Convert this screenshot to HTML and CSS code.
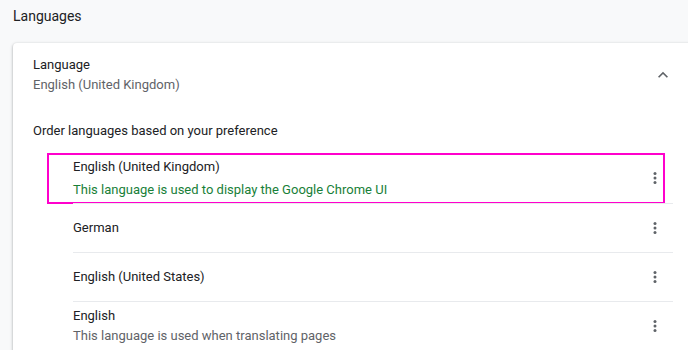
FILE: index.html
```html
<!DOCTYPE html>
<html lang="en">
<head>
<meta charset="utf-8">
<title>Languages</title>
<link rel="stylesheet" href="styles.css">
</head>
<body>
<div class="page">
  <h2 class="title">Languages</h2>
  <div class="card">
    <div class="header-row">
      <div class="header-text">
        <div class="primary">Language</div>
        <div class="secondary">English (United Kingdom)</div>
      </div>
      <svg class="chevron" viewBox="0 0 24 24" width="20" height="20"><path d="M12 8l-6 6 1.41 1.41L12 10.83l4.59 4.58L18 14z"/></svg>
    </div>
    <div class="order">Order languages based on your preference</div>
    <div class="list">
      <div class="row row-selected">
        <div class="row-text">
          <div class="primary">English (United Kingdom)</div>
          <div class="explain">This language is used to display the Google Chrome UI</div>
        </div>
        <div class="kebab"><svg viewBox="0 0 24 24" width="18" height="18"><circle cx="12" cy="6" r="2"/><circle cx="12" cy="12" r="2"/><circle cx="12" cy="18" r="2"/></svg></div>
      </div>
      <div class="row">
        <div class="row-text">
          <div class="primary">German</div>
        </div>
        <div class="kebab"><svg viewBox="0 0 24 24" width="18" height="18"><circle cx="12" cy="6" r="2"/><circle cx="12" cy="12" r="2"/><circle cx="12" cy="18" r="2"/></svg></div>
      </div>
      <div class="row">
        <div class="row-text">
          <div class="primary">English (United States)</div>
        </div>
        <div class="kebab"><svg viewBox="0 0 24 24" width="18" height="18"><circle cx="12" cy="6" r="2"/><circle cx="12" cy="12" r="2"/><circle cx="12" cy="18" r="2"/></svg></div>
      </div>
      <div class="row">
        <div class="row-text">
          <div class="primary">English</div>
          <div class="secondary">This language is used when translating pages</div>
        </div>
        <div class="kebab"><svg viewBox="0 0 24 24" width="18" height="18"><circle cx="12" cy="6" r="2"/><circle cx="12" cy="12" r="2"/><circle cx="12" cy="18" r="2"/></svg></div>
      </div>
    </div>
  </div>
</div>
</body>
</html>
```
FILE: styles.css
```css
html, body {
  margin: 0;
  padding: 0;
}
body {
  background: #f8f9fa;
  font-family: Roboto, "Liberation Sans", Arial, sans-serif;
  font-size: 13px;
  line-height: 20px;
  color: #202124;
  overflow: hidden;
  width: 688px;
  height: 350px;
}
.page {
  padding-left: 13px;
}
.title {
  margin: 0;
  padding-top: 6px;
  font-size: 14px;
  font-weight: 400;
  line-height: 20px;
  color: #202124;
  margin-bottom: 17px;
}
.card {
  width: 640px;
  padding: 0 20px;
  background: #fff;
  border-radius: 4px;
  box-shadow: 0 1px 2px rgba(60, 64, 67, 0.3), 0 1px 3px 1px rgba(60, 64, 67, 0.15);
  min-height: 320px;
}
.header-row {
  height: 64px;
  display: flex;
  align-items: center;
  justify-content: space-between;
}
.primary {
  color: #202124;
}
.secondary {
  color: #5f6368;
}
.chevron {
  fill: #5f6368;
  display: block;
}
.order {
  margin-top: 14px;
  color: #202124;
}
.list {
  margin-top: 12px;
  padding-left: 40px;
}
.row {
  position: relative;
  min-height: 48px;
  display: flex;
  align-items: center;
  justify-content: space-between;
  border-top: 1px solid #e8eaed;
}
.row-selected {
  min-height: 50px;
  border-top: none;
}
.row-selected::after {
  content: "";
  position: absolute;
  top: 0;
  bottom: -1px;
  left: -26px;
  right: 8px;
  border: 2px solid #ff00cc;
  pointer-events: none;
}
.explain {
  color: #188038;
  margin-top: 3px;
}
.kebab {
  width: 36px;
  height: 36px;
  display: flex;
  align-items: center;
  justify-content: center;
}
.kebab svg {
  fill: #5f6368;
  display: block;
}
```
